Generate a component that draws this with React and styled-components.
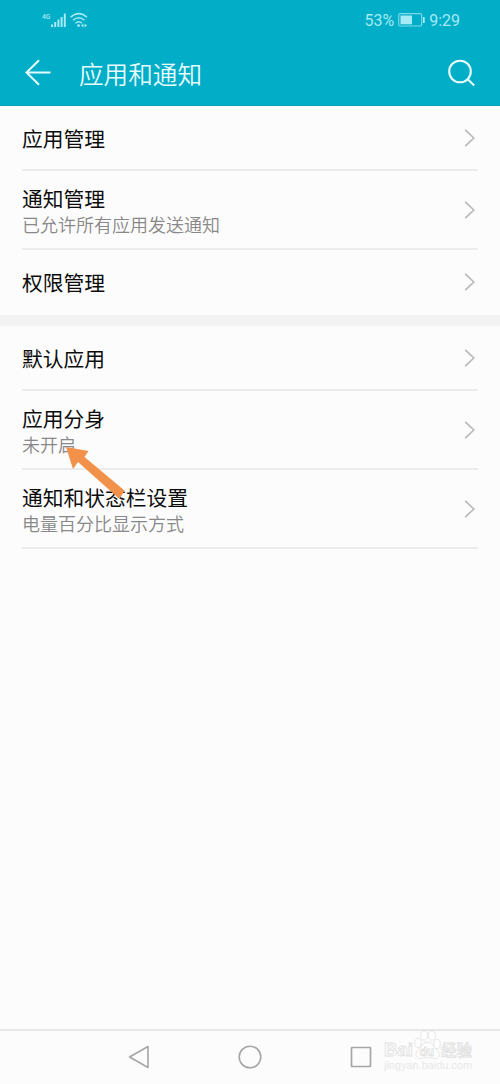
import React from "react";
import styled, { createGlobalStyle } from "styled-components";

const Global = createGlobalStyle`
  * { box-sizing: border-box; }
  body { margin: 0; background: #fcfcfc; font-family: Roboto, "Noto Sans CJK SC", sans-serif; }
`;

const Screen = styled.div`
  width: 500px;
  height: 1084px;
  display: flex;
  flex-direction: column;
  background: #fcfcfc;
  position: relative;
  overflow: hidden;
`;

const Header = styled.header`
  height: 106px;
  background: #02adc7;
  border-bottom: 1px solid #0a9fb6;
  flex: none;
`;

const StatusBar = styled.div`
  height: 40px;
  padding: 0 40px 0 42px;
  display: flex;
  align-items: center;
  justify-content: space-between;
  color: #a5eaf5;
  font-size: 16px;
`;

const StatusGroup = styled.div`
  display: flex;
  align-items: center;
  gap: 4px;
`;

const TitleBar = styled.div`
  height: 65px;
  padding: 0 24px;
  display: flex;
  align-items: center;
`;

const PageTitle = styled.h1`
  margin: 0 auto 0 27px;
  font-size: 24.6px;
  line-height: 36px;
  font-weight: 350;
  font-family: "Noto Sans CJK SC", sans-serif;
  color: #e6fcff;
`;

const List = styled.section`
  flex: none;
`;

const Gap = styled.div`
  height: 11px;
  flex: none;
  background: #f3f3f3;
`;

const Row = styled.div`
  margin: 0 22px;
  height: ${(p) => p.$h}px;
  display: flex;
  align-items: center;
  justify-content: space-between;
  border-bottom: 2px solid ${(p) => (p.$last ? "transparent" : "#ebebeb")};
`;

const RowText = styled.div`
  padding-top: ${(p) => (p.$double ? 2 : 0)}px;
`;

const RowTitle = styled.div`
  font: 400 20.75px/26px "Noto Sans CJK SC", sans-serif;
  color: #0c0c0c;
`;

const RowNote = styled.div`
  font: 350 18px/26px "Noto Sans CJK SC", sans-serif;
  color: #888;
`;

const Spacer = styled.div`
  flex: 1;
`;

const NavBar = styled.nav`
  height: 55px;
  flex: none;
  padding-bottom: 2px;
  border-top: 2px solid #e8e8e8;
  display: flex;
  align-items: center;
  justify-content: center;
  gap: 87px;
`;

const Pointer = styled.svg`
  position: absolute;
  left: 60px;
  top: 440px;
`;

const Watermark = styled.svg`
  position: absolute;
  left: 380px;
  top: 1026px;
`;

const Chevron = () => (
  <svg width="14" height="20" viewBox="0 0 14 20" fill="none" stroke="#b9b9b9" strokeWidth="1.7">
    <path d="M1.200 1.800L9.800 10L1.200 18.200" />
  </svg>
);

const Item = ({ title, note, h, last }) => (
  <Row $h={h} $last={last}>
    <RowText $double={Boolean(note)}>
      <RowTitle>{title}</RowTitle>
      {note && <RowNote>{note}</RowNote>}
    </RowText>
    <Chevron />
  </Row>
);

export default function App() {
  return (
    <Screen>
      <Global />
      <Header>
        <StatusBar>
          <svg width="46" height="18" viewBox="0 0 46 18" fill="#a5eaf5">
            <text x="0" y="7.500" fontSize="8" fontWeight="500" textLength="8.500" lengthAdjust="spacingAndGlyphs">4G</text>
            <rect x="9" y="13.500" width="2" height="2.500" />
            <rect x="12.200" y="11" width="2" height="5" />
            <rect x="15.400" y="8.500" width="2" height="7.500" />
            <rect x="18.600" y="6" width="2" height="10" />
            <rect x="21.800" y="2.500" width="2" height="13.500" />
            <g fill="none" stroke="#a5eaf5" strokeWidth="1.500">
              <path d="M28.500 6.200Q36.800 -1 45 6.200" />
              <path d="M31 9.300Q36.800 4.200 42.500 9.300" />
              <path d="M33.500 12.200Q36.800 9.300 40 12.200" />
            </g>
            <circle cx="36.500" cy="14.600" r="1.400" />
            <path d="M39 14.500l2.400-1.900v3.800zM45 14.500l-2.400-1.900v3.800z" />
          </svg>
          <StatusGroup>
            <span>53%</span>
            <svg width="27" height="14" viewBox="0 0 27 14">
              <rect x="0.700" y="0.700" width="23" height="12.300" rx="1.500" fill="none" stroke="#7bdbe9" strokeWidth="1.200" />
              <rect x="2.500" y="2.500" width="11.500" height="8.800" fill="#a5eaf5" />
              <rect x="25" y="4" width="1.700" height="6" fill="#a5eaf5" />
            </svg>
            <span>9:29</span>
          </StatusGroup>
        </StatusBar>
        <TitleBar>
          <svg width="28" height="28" viewBox="0 0 28 28" fill="none" stroke="#e6fcff" strokeWidth="2">
            <path d="M26.500 13.500H2.500M15 1.300L2.500 13.500L15 25.700" />
          </svg>
          <PageTitle>应用和通知</PageTitle>
          <svg width="28" height="28" viewBox="0 0 28 28" fill="none" stroke="#e6fcff" strokeWidth="2.100">
            <circle cx="12" cy="12.500" r="10.800" />
            <path d="M19.700 20.200L26.200 26.600" />
          </svg>
        </TitleBar>
      </Header>
      <List>
        <Item title="应用管理" h={65} />
        <Item title="通知管理" note="已允许所有应用发送通知" h={79} />
        <Item title="权限管理" h={65} last />
      </List>
      <Gap />
      <List>
        <Item title="默认应用" h={65} />
        <Item title="应用分身" note="未开启" h={79} />
        <Item title="通知和状态栏设置" note="电量百分比显示方式" h={79} />
      </List>
      <Spacer />
      <NavBar>
        <svg width="24" height="24" viewBox="0 0 24 24" fill="none" stroke="#a6a6a6" strokeWidth="1.600" strokeLinejoin="round">
          <path d="M2.600 12L21 1.500V22.500Z" />
        </svg>
        <svg width="24" height="24" viewBox="0 0 24 24" fill="none" stroke="#a6a6a6" strokeWidth="1.600">
          <circle cx="12" cy="12" r="10.800" />
        </svg>
        <svg width="24" height="24" viewBox="0 0 24 24" fill="none" stroke="#a6a6a6" strokeWidth="1.700">
          <rect x="2.500" y="2.500" width="19" height="19" rx="0.500" />
        </svg>
      </NavBar>
      <Pointer width="70" height="65" viewBox="0 0 70 65">
        <path d="M6 7L28.500 11L24.500 17L64.500 50.500L59.500 59L18 22L13 29Z" fill="#f1914a" />
      </Pointer>
      <Watermark width="100" height="52" viewBox="0 0 100 52">
        <g fill="#fefefe" stroke="#e0e0e0" strokeWidth="0.800">
          <text x="4" y="30" fontSize="18" fontWeight="700" fontFamily="Liberation Sans" textLength="29" lengthAdjust="spacingAndGlyphs">Bai</text>
          <ellipse cx="38" cy="17" rx="3.300" ry="4.500" />
          <ellipse cx="44" cy="9.500" rx="3.400" ry="4.600" />
          <ellipse cx="52" cy="9.500" rx="3.400" ry="4.600" />
          <ellipse cx="57" cy="18" rx="3.300" ry="4.500" />
          <path d="M47.500 16C43 16 42 21 38 24C34 28 36 33 41 32.500C45 31.500 50 31.500 54 32.500C60 33 61 28 57 24C53 21 52 16 47.500 16Z" />
          <text x="39.500" y="30" fontSize="12" fontWeight="700" fontFamily="Liberation Sans">du</text>
          <text x="61" y="30" fontSize="16" fontWeight="500" fontFamily="Noto Sans CJK SC" textLength="31" lengthAdjust="spacingAndGlyphs">经验</text>
        </g>
        <text x="4" y="43" fontSize="10" fontFamily="Liberation Sans" fill="#e8e8e8" textLength="88" lengthAdjust="spacingAndGlyphs">jingyan.baidu.com</text>
      </Watermark>
    </Screen>
  );
}
